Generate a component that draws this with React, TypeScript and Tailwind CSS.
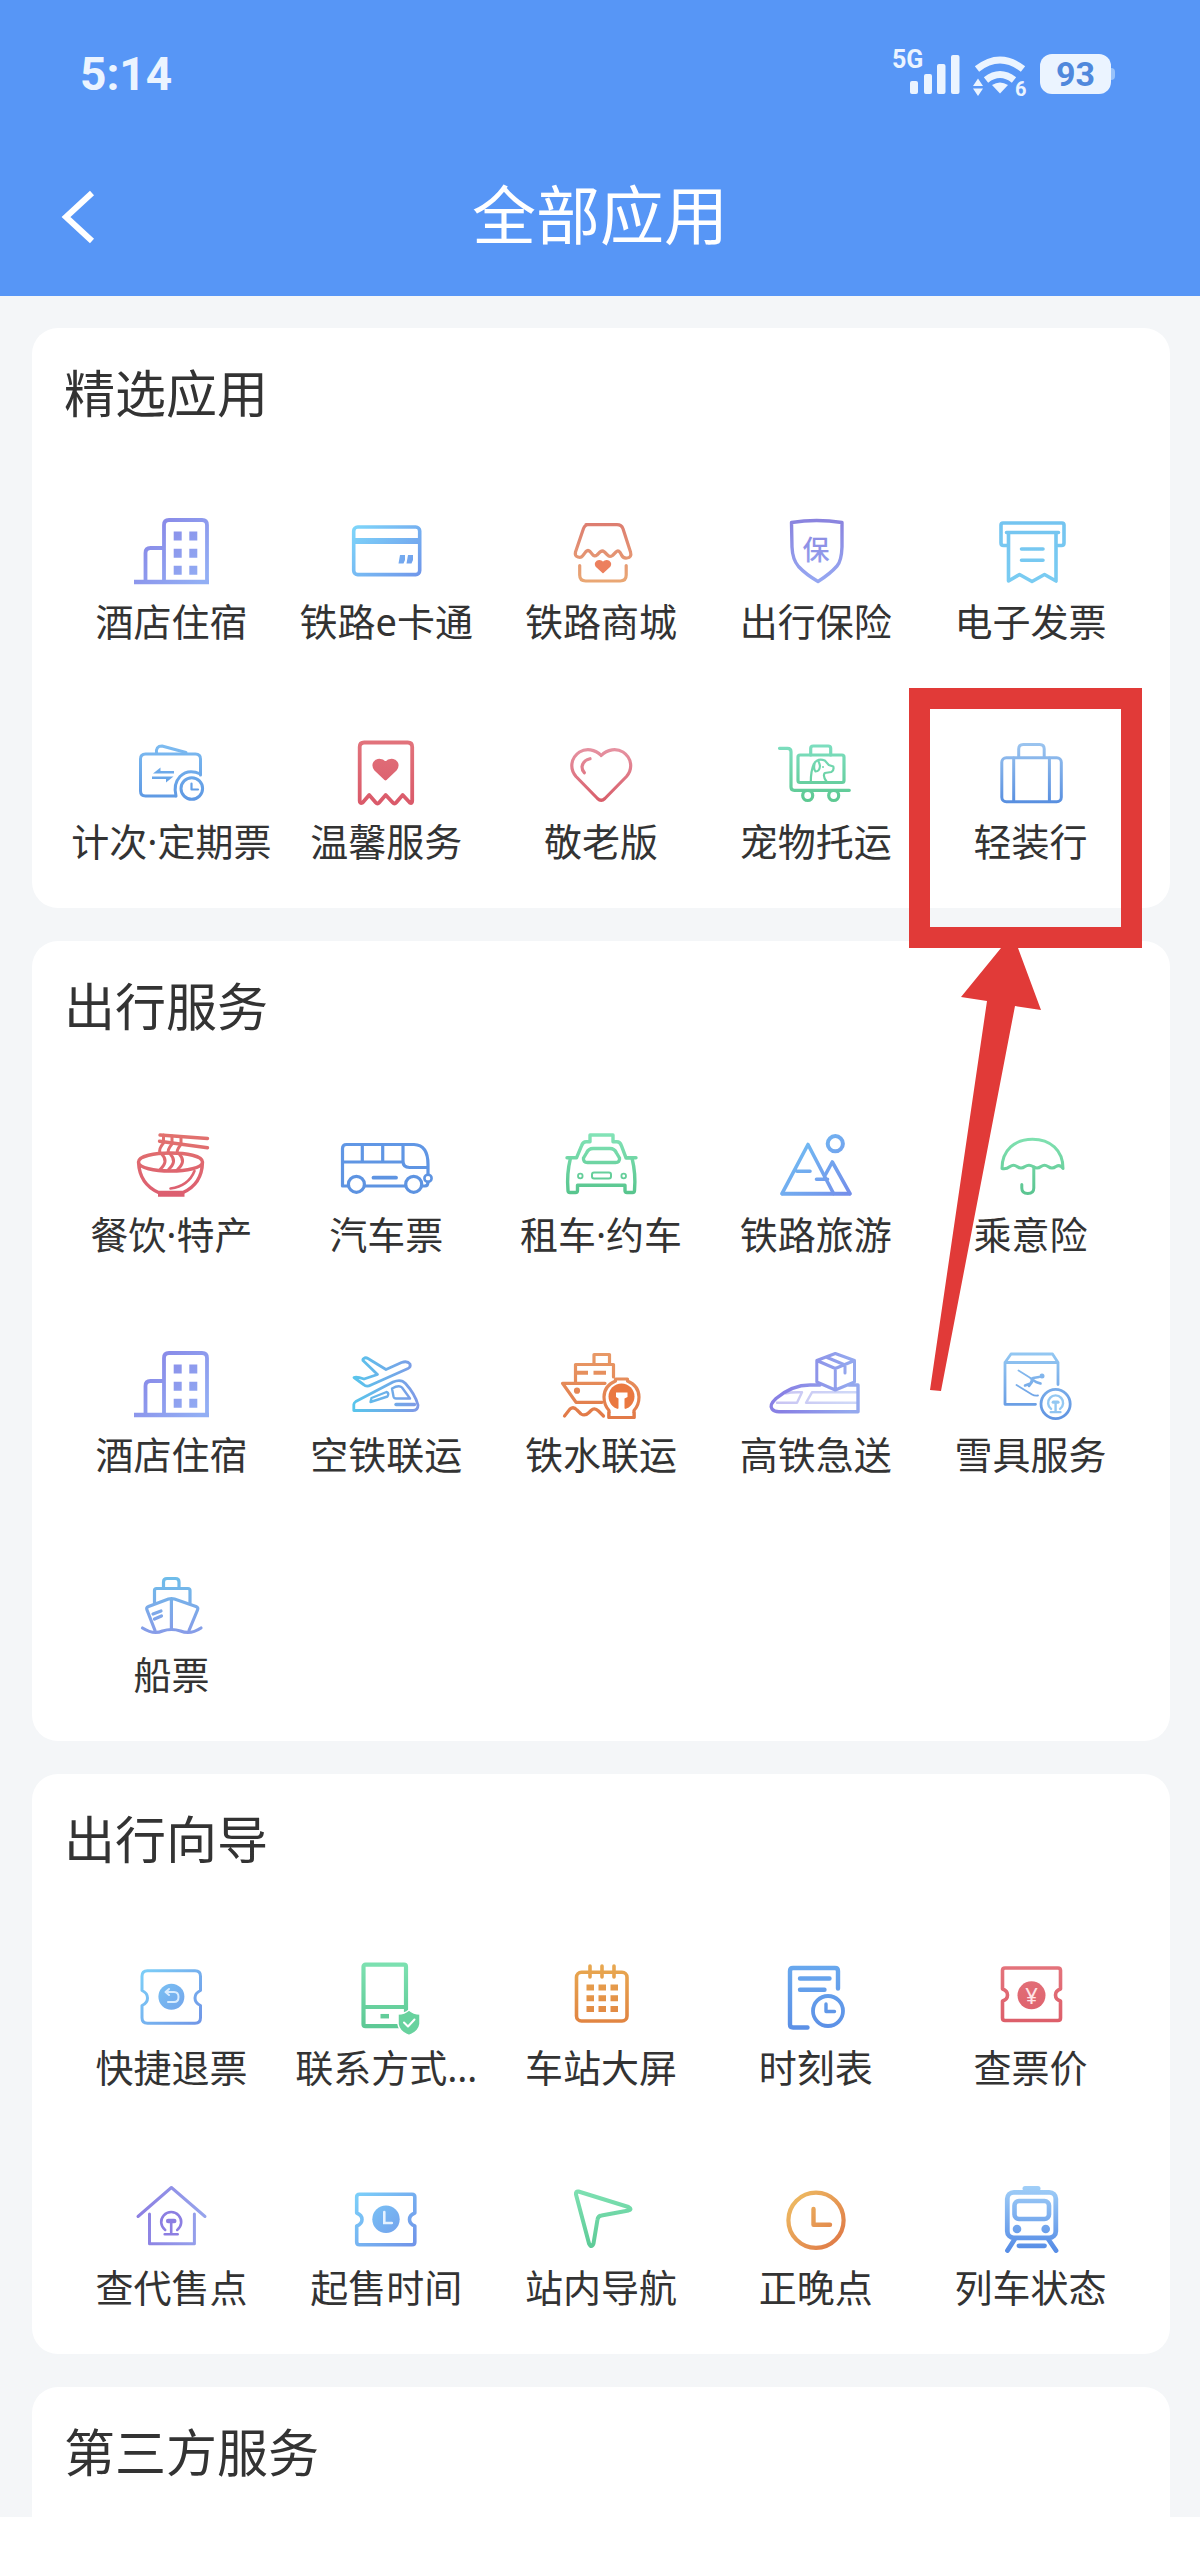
import { useId, type ReactNode } from 'react'

interface IconProps {
  from: string
  to: string
  // gradient direction, vertical unless given
  dir?: 'v' | 'h' | 'd'
  width?: number
  children: ReactNode | ((paint: string) => ReactNode)
}

const DIRS = {
  v: { x1: 0, y1: 8, x2: 0, y2: 72 },
  h: { x1: 16, y1: 0, x2: 84, y2: 0 },
  d: { x1: 20, y1: 12, x2: 80, y2: 70 },
}

function Icon({ from, to, dir = 'v', width = 3.2, children }: IconProps) {
  const id = useId()
  const paint = `url(#${id})`
  return (
    <svg
      viewBox="0 0 100 80"
      className="w-[100px] h-[80px] shrink-0"
      fill="none"
      stroke={paint}
      strokeWidth={width}
      strokeLinejoin="round"
      strokeLinecap="round"
      aria-hidden="true"
    >
      <defs>
        <linearGradient id={id} gradientUnits="userSpaceOnUse" {...DIRS[dir]}>
          <stop offset="0" stopColor={from} />
          <stop offset="1" stopColor={to} />
        </linearGradient>
      </defs>
      {typeof children === 'function' ? children(paint) : children}
    </svg>
  )
}

function HotelIcon() {
  return (
    <Icon from="#8884e6" to="#92aef4" dir="d" width={3.8}>
      {p => (
        <>
          <path d="M43 71V14q0-5 5-5h33q5 0 5 5v57M24.5 71V42q0-5 5-5H43" />
          <path d="M13 71h75" strokeWidth={4.5} strokeLinecap="butt" />
          <path
            fill={p}
            stroke="none"
            d="M52.7 20.5h8v9h-8zM68.3 20.5h8v9h-8zM52.7 37.7h8v9h-8zM68.3 37.7h8v9h-8zM52.7 54.8h8v9h-8zM68.3 54.8h8v9h-8z"
          />
        </>
      )}
    </Icon>
  )
}

function CardIcon() {
  return (
    <Icon from="#7dd6fa" to="#7096ea" dir="d" width={3.6}>
      {p => (
        <>
          <rect x="17.7" y="16" width="66" height="47.6" rx="4" />
          <path d="M18 30h66" strokeWidth={6} strokeLinecap="butt" />
          <path fill={p} stroke="none" d="M64 44h5v5l-1.5 3.5h-5zM72 44h5v5l-1.5 3.5H70.5z" />
        </>
      )}
    </Icon>
  )
}

function MallIcon() {
  return (
    <Icon from="#dc7a70" to="#eaa874">
      <path d="M35 13.7h31q4.5 0 6 4L79.5 41q1.5 5.5-3.5 6-4 .5-5.5-3-2.5-6-5.5-3l-3.5 3.5q-3 2-5-.5l-3-3q-2.5-2-4.5 0l-3 3q-2.5 2-4.5-.5l-2.5-3q-2-2-4 0l-3.5 4.5q-1.5 2-4.5 1-3.5-1-2.5-5l8-23.5q1.5-4 5.5-4z" />
      <path d="M28.7 54.5V64q0 6 6 6h34.5q6 0 6-6v-9.5" />
      <path
        fill="#ec805e"
        stroke="#ec805e"
        strokeWidth={1.6}
        d="M52 61.5l-6.5-6q-2-3 .5-5 3-1.8 6 1 3-2.8 6-1 2.5 2 .5 5z"
      />
    </Icon>
  )
}

function ShieldIcon() {
  return (
    <Icon from="#8a83de" to="#96a8f2" width={3.4}>
      {p => (
        <>
          <path d="M25.5 11.5q25-4 50.5 0V36q-.5 14-5 19-7 8-19 15.5-12-7-19.5-15-6-7-6.5-19.5z" />
          <text x="50" y="49" textAnchor="middle" fontSize="27" stroke="none" fill={p} className="font-medium">
            保
          </text>
        </>
      )}
    </Icon>
  )
}

function InvoiceIcon() {
  return (
    <Icon from="#74c4f0" to="#7accf2" width={3.6}>
      <path d="M26 34.5h-3.5q-2.5 0-2.5-2.5V14q0-2 2-2h59q2 0 2 2v18q0 2.5-2.5 2.5H77M25.5 21.5h52" />
      <path d="M27.5 22v48l11-6.5 12.5 7 12.5-7 11.5 6.5V22M40.5 38h21.5M40.5 49.3h21.5" />
    </Icon>
  )
}

function WalletIcon() {
  return (
    <Icon from="#80bff2" to="#5c96e2" width={3}>
      {p => (
        <>
          <path d="M79.5 44V28q0-5-5-5h-50q-5 0-5 5v32q0 5 5 5H54.5" />
          <path d="M35.5 22.5q-1-7.5 5.5-7.5L65 21.5" />
          <path d="M55 65q-3-12 4-19.5 8-8 20.5-2.5" />
          <circle cx="70.8" cy="57.5" r="10.8" />
          <path d="M70.5 52.5v6h6.5" strokeWidth={2.2} />
          <path fill={p} stroke="none" d="M32 42.4l7.5-6v3.6h13.5v2.4zM52.5 45.6l-7.5 6V48H31v-2.4z" />
        </>
      )}
    </Icon>
  )
}

function CareIcon() {
  return (
    <Icon from="#e2747c" to="#da5a6a" width={3.8}>
      {p => (
        <>
          <path d="M23.7 70V16q0-4.5 4.5-4.5h43.5q4.5 0 4.5 4.5v54q0 3-2.5 1.5l-7-7.5-6.5 7.5q-1.7 2-3.5 0l-7-7.5-6.5 7.5q-1.7 2-3.5 0l-6.5-7.5-6.5 7.5q-3 1.5-3-1.5z" />
          <path
            fill={p}
            strokeWidth={3}
            d="M49.5 48L39.5 38.5q-3.5-5 1-8.5 4.5-2 9 2.3 4.5-4.3 9-2.3 4.5 3.5 1 8.5z"
          />
        </>
      )}
    </Icon>
  )
}

function HeartIcon() {
  return (
    <Icon from="#e89cac" to="#d85c68">
      <path d="M50.2 24.5C44 18 35 17 28.5 21 19.5 27 18.5 38 25 45.5L46.5 67.5q3.7 3.5 7.4 0L75.5 45.5C82 38 81 27 72 21 65.5 17 56.5 18 50.2 24.5z" />
      <path d="M39 27.7q-7 1.5-8 8 0 3.5 2.3 6" />
    </Icon>
  )
}

function PetIcon() {
  return (
    <Icon from="#80e0c4" to="#5cc890">
      {p => (
        <>
          <path d="M13.5 17.3h8q3.5 0 3.5 3.5V56q0 3.3 3.3 3.3h55" />
          <rect x="32" y="24" width="46" height="27.5" rx="2" />
          <path d="M44.7 24v-6.5q0-2.5 2.5-2.5h15q2.5 0 2.5 2.5V24" />
          <circle cx="41.7" cy="64.5" r="5" />
          <circle cx="67.7" cy="64.5" r="5" />
          <path
            d="M44.8 51q0-11 3-18 4-6.5 11-3.5l4 4.5 4.5 1.5q1 4-2 5.5l-6.5 1q-2.5 3 2 9M49 31q-2 7 .5 9.5 4 0 4.5-5.5-.5-3-2-5.5"
            strokeWidth={2.2}
          />
          <circle cx="57" cy="36" r="1" fill={p} stroke="none" />
        </>
      )}
    </Icon>
  )
}

function SuitcaseIcon() {
  return (
    <Icon from="#a0c8f0" to="#588fe0" width={3}>
      <rect x="20.8" y="26.7" width="59.5" height="44" rx="4.5" />
      <path d="M37.7 26.5V18q0-4.5 4.5-4.5h16.5q4.5 0 4.5 4.5v8.5M32.7 27v43.5M68.4 27v43.5" />
    </Icon>
  )
}

function NoodleIcon() {
  return (
    <Icon from="#e2726e" to="#dc5e70" width={3.4}>
      <path d="M17.5 38c0-12 64-12 64 0s-64 12-64 0q1 22 20 30.5h24.5q19-8.5 19.5-30.5" />
      <path d="M37 70.5h26.5" strokeWidth={4.5} strokeLinecap="butt" />
      <path d="M73.5 47q-6 15-24 17.5" strokeWidth={2.6} />
      <path d="M39 11l47.5 3.5M38.5 17.2l48 6.5" />
      <path
        d="M42.5 11v8q-5 6-3.5 9.5M51 12v8q-5 6-3.5 9M60 12.5v8q-5 6-3.5 9M41 30.5q7 7-2 15M49.5 30.5q7 7-2 15M58.5 30.5q7 7-2 15"
        strokeWidth={3}
      />
    </Icon>
  )
}

function BusIcon() {
  return (
    <Icon from="#6298e6" to="#5c92e0">
      <path d="M12 62H6.5V24.5q0-4 4-4H78q14 .5 14 20v10M6.5 38h60M26.3 20.5V38M46.7 20.5V38M67 20.5V37q0 6.5 6.5 6.5H92" />
      <path d="M29 62h40M86 62h3q3 0 3-4" />
      <path d="M37.5 53.7h22.5" strokeWidth={3.8} />
      <circle cx="20.4" cy="60.3" r="8" />
      <circle cx="77.7" cy="60.3" r="8" />
      <circle cx="92" cy="54.3" r="3.6" strokeWidth={2.6} />
    </Icon>
  )
}

function TaxiIcon() {
  return (
    <Icon from="#84e4b8" to="#56c48c" width={3.4}>
      <path d="M39 17.8V11h23v6.8h4q3 0 4.5 4l4.5 12H85M39 17.8h-4q-3 0-4.5 4l-5 12H16M75 34h6q4 16 2.5 32.5 0 2-2 2h-5.5q-2 0-2-2V61.2H26.5v5.3q0 2-2 2h-5.5q-2 0-2-2Q15.5 50 19.5 34" />
      <path d="M42 24.5h17q4.5 0 6.5 4.5l3 5q.5 4.5-4 4.5H36.5q-4.5 0-4-4.5l3-5q2-4.5 6.5-4.5z" />
      <rect x="41" y="48.5" width="19" height="6" rx="2" strokeWidth={2} />
      <circle cx="29.3" cy="52" r="2.3" strokeWidth={1.8} />
      <circle cx="72.7" cy="52" r="2.3" strokeWidth={1.8} />
    </Icon>
  )
}

function MountainIcon() {
  return (
    <Icon from="#70c4f4" to="#7490ea" dir="d" width={3.6}>
      <path d="M16 69.7L42 20.5l25.5 49M31 47.3h13M50.5 55.3h11" />
      <path d="M59.5 50.5l6.8-12.5L84 69.7" />
      <path d="M16.5 69.7h67" strokeWidth={4} />
      <circle cx="69.3" cy="19.7" r="7.6" strokeWidth={4} />
    </Icon>
  )
}

function UmbrellaIcon() {
  return (
    <Icon from="#84e4b4" to="#5ac490" width={3}>
      <path d="M21 44.5C21 26 34 15.3 51.5 15.3S82 26 82 44.5q-3-4.5-7-2-4 3-8 0-3.5-2.5-7 0-4 3-8 0-4-2.5-8 0-4 3-8 0-3.5-2.5-7 0-4 3-8 2z" />
      <path d="M52.8 43v21q0 5.5-6 5.5t-6-5.5v-3.5" />
    </Icon>
  )
}

function PlaneTrainIcon() {
  return (
    <Icon from="#58c6ec" to="#8098e6" dir="h" width={2.8}>
      <path d="M28 14.5q1.5-1.5 4 0L50 25.5l15.5-7q6-2 8.5 1.5 1 3-2 4.5L35 41q-4.5 2.5-7.5-.5L18 33.5q3-1 10 1.5l13.5-4.5L27 16.5q-.5-1 1-2z" />
      <path d="M17.8 66.5v-6q0-1.5 2-3L57 38q8-3.5 12.5 1.5Q79 50 82 61q0 5.5-5 5.5z" />
      <path d="M56 44.5q7-4 10-1l8 11H60q-2 0-2.5-2zM34.5 58l1-4 15-6q3 1 1 4.5z" strokeWidth={2.4} />
      <path d="M60 60.5h18.5" strokeWidth={3.4} />
    </Icon>
  )
}

// rail emblem: an open ring over a rail cross-section
function RailMark({ cx, cy, r, width }: { cx: number; cy: number; r: number; width: number }) {
  const s = r / 10
  return (
    <g transform={`translate(${cx} ${cy}) scale(${s})`} strokeWidth={width / s}>
      <path d="M-6 8.5A10 10 0 1 1 6 8.5" />
      <path d="M-3-.5h6" strokeWidth={4.6} />
      <path d="M0 0v11M-6.5 12.8h13" />
    </g>
  )
}

function ShipRailIcon() {
  return (
    <Icon from="#e89a68" to="#e27a48">
      <path d="M43 19.5V10.5h15.5v9M24.5 38V20.5h38V33M54 39.3H11.5l13.5 19H51" />
      <path d="M26 28.7h11M42.5 28.7h12.5" strokeWidth={4} strokeLinecap="butt" />
      <circle cx="26" cy="46.7" r="1.5" />
      <path d="M13.5 72l5.5-7q3.5-3 7 1l4 4q4 2.5 8-1.5l2-2q3.5-3.5 7.5.5l5 5" />
      <path fill="#fff" d="M64.5 37v-2h12v2q11.5 5 11.5 16 0 8-5 13.5v7H58v-7q-5-5.5-5-13.5 0-11 11.5-16z" />
      <circle cx="70.5" cy="52.5" r="13" fill="#ea7840" stroke="none" />
      <path
        fill="#fff"
        stroke="none"
        d="M65 48.5h11.5v4.5l-3 1.5V64q1 4 8.5 5v3H59v-3q7.5-1 8.5-5v-9.5L65 53z"
      />
      <path d="M58 68.5v5h25v-5" />
    </Icon>
  )
}

function ExpressIcon() {
  return (
    <Icon from="#8880e4" to="#94a8ee" dir="h" width={3.4}>
      <path d="M54 41H44Q26 41 10 54.5q-7 6.5-4 10.5 2 2.7 7 2.7h79V41h-9" />
      <path d="M20 49.5q4-1.5 16-1.2l-5 10.5H11M92 48.3H46l-6 10.5h52" strokeWidth={2.4} opacity={0.45} />
      <path
        d="M69.3 9.5l19.2 7v21.5l-19.2 8-18.5-8V16.5zM50.8 16.5l18.5 8 19.2-8M69.3 24.5V46M60 13l19 8v8"
        strokeWidth={3}
      />
    </Icon>
  )
}

function SkiIcon() {
  return (
    <Icon from="#94c8f2" to="#6296e2" width={2.8}>
      {p => (
        <>
          <path d="M24 18.5l6-8.5h41.5l5.5 8.5zM24 18.5v41.8h30.5M77 18.5v22" />
          <path d="M37.5 26.5l12 7.5M35.5 41l15.5 9.5q2.5 1.5 6 1" strokeWidth={1.8} />
          <path d="M44 41.5l5.5-2 2.5-5.5 6-1M50 34.5l5 3.5 4.5 1.5M51 38l-3 4" strokeWidth={2.6} />
          <circle cx="61" cy="32" r="2.5" fill={p} stroke="none" />
          <circle cx="74.6" cy="60" r="14.6" />
          <RailMark cx={74.6} cy={58.5} r={7.5} width={2.4} />
        </>
      )}
    </Icon>
  )
}

function ShipIcon() {
  return (
    <Icon from="#6cc0ea" to="#889ae8">
      <path d="M42.5 24V18q0-3.5 3.5-3.5h8.5q3.5 0 3.5 3.5v6M33.5 39V26.5q0-2 2-2H67q2 0 2 2V39" />
      <path d="M34 66.5L26 46q-1-2.5 1.5-3.5L47.5 35q3-1 6 0L75 42.5q2.5 1 1.5 3.5L68 66.5M50.4 35v30M32 50l8-3M33.5 55l7-3" />
      <path d="M21.5 64q11 7 20 3 9-3 18 0 10 4 20.5-3" />
    </Icon>
  )
}

function RefundIcon() {
  return (
    <Icon from="#7cd0f8" to="#7094e6" dir="d" width={3}>
      {p => (
        <>
          <path d="M26.5 13.8H74q5.5 0 5.5 5.5V33.5q-5.5 2.5-5.5 7.5t5.5 7.5v12.3q0 5.5-5.5 5.5H26.5q-5.5 0-5.5-5.5V48.5q5.5-2.5 5.5-7.5t-5.5-7.5V19.3q0-5.5 5.5-5.5z" />
          <circle cx="50.4" cy="39.7" r="13" fill={p} stroke="none" />
          <path d="M48 32l-3.5 3 3.5 3M45 35h8q4.5 0 4.5 5t-4.5 5h-6" stroke="#d8ecff" strokeWidth={2} />
        </>
      )}
    </Icon>
  )
}

function PhoneIcon() {
  return (
    <Icon from="#7ce0b0" to="#5cc894" width={4.2}>
      <rect x="27.5" y="7.7" width="42.5" height="61.5" rx="2" />
      <path d="M28 50h41.5" />
      <path d="M44.5 59.2h8.5" strokeWidth={4.5} strokeLinecap="butt" />
      <path
        fill="#68d29e"
        stroke="#fff"
        strokeWidth={1.5}
        d="M73 53q4.5 4 11 4v10q-1 7.5-11 11.5-10-4-11-11.5V57q6.5 0 11-4z"
      />
      <path d="M68 65.5l4 4 6.5-7" stroke="#fff" strokeWidth={2} />
    </Icon>
  )
}

function CalendarIcon() {
  return (
    <Icon from="#e8a850" to="#e08040" width={3.6}>
      {p => (
        <>
          <rect x="25.5" y="15.3" width="50.5" height="48.7" rx="5" />
          <path d="M39 9v11M51 9v11M63 9v11" />
          <path
            fill={p}
            stroke="none"
            d="M35.5 27.5h7.5v6h-7.5zM47.5 27.5h7.5v6h-7.5zM59.5 27.5h7.5v6h-7.5zM35.5 38.2h7.5v6h-7.5zM47.5 38.2h7.5v6h-7.5zM59.5 38.2h7.5v6h-7.5zM35.5 49h7.5v6h-7.5zM47.5 49h7.5v6h-7.5zM59.5 49h7.5v6h-7.5z"
          />
        </>
      )}
    </Icon>
  )
}

function TimetableIcon() {
  return (
    <Icon from="#68a8ee" to="#5c90e6" width={4.4}>
      <path d="M72 31.5V14q0-3-3-3H27q-3 0-3 3v53.5q0 3 3 3h14.5M34 21.5h29.5M34 32.7h24.5" />
      <circle cx="62" cy="54" r="15" strokeWidth={3.8} />
      <path d="M60 47v7.5h8.5" strokeWidth={3.4} />
    </Icon>
  )
}

function PriceIcon() {
  return (
    <Icon from="#e4747c" to="#dc5c68" width={3.6}>
      {p => (
        <>
          <path d="M24 11h53q2.5 0 2.5 2.5V32q-5 1.5-5 6t5 6v17q0 2.5-2.5 2.5H24q-2.5 0-2.5-2.5V44q5-1.5 5-6t-5-6V13.5q0-2.5 2.5-2.5z" />
          <circle cx="50.5" cy="38.3" r="14" fill={p} stroke="none" />
          <text x="50.5" y="46.5" textAnchor="middle" fontSize="22" stroke="none" fill="#ffe4e6">
            ¥
          </text>
        </>
      )}
    </Icon>
  )
}

function HouseIcon() {
  return (
    <Icon from="#8c7ee2" to="#96a4ec" dir="h" width={3}>
      <path d="M17 39.5L50.4 10.5l33.6 29M28.5 37v29.7h44.9V37" />
      <RailMark cx={50.2} cy={44.5} r={10} width={2.6} />
    </Icon>
  )
}

function SaleTimeIcon() {
  return (
    <Icon from="#7cd2fa" to="#7092e8" dir="d" width={3.6}>
      {p => (
        <>
          <path d="M23.5 17.3H76q2.8 0 2.8 2.8V36q-5.3 2-5.3 6.5t5.3 6.5v16q0 2.7-2.8 2.7H23.5q-2.8 0-2.8-2.7V49q5.3-2 5.3-6.5T20.7 36V20q0-2.7 2.8-2.7z" />
          <circle cx="50" cy="42.3" r="13.7" fill={p} stroke="none" />
          <path d="M48.3 35v11h7.5" stroke="#e6f2ff" strokeWidth={2.6} strokeLinejoin="miter" />
        </>
      )}
    </Icon>
  )
}

function NavIcon() {
  return (
    <Icon from="#80e2b4" to="#5cca96" width={4}>
      <path d="M27.5 14.5l50 15.5q4 2 0 3.5L50.5 38.5q-3.5.5-4 4L42.5 66.5q-2 5-4.5 0l-13-49q-.5-3.5 2.5-3z" />
    </Icon>
  )
}

function ClockIcon() {
  return (
    <Icon from="#f0c466" to="#de7444" dir="d" width={4.2}>
      <circle cx="50" cy="43.3" r="27.6" />
      <path d="M47.5 32v15.7h16.5" strokeWidth={4.4} />
    </Icon>
  )
}

function MetroIcon() {
  return (
    <Icon from="#a2d0f8" to="#588ee6" width={4.8}>
      {p => (
        <>
          <rect x="26.3" y="15.3" width="48.5" height="45.5" rx="6.5" />
          <path d="M44 11.5h13" strokeWidth={5} />
          <rect x="33.5" y="24" width="34.5" height="18" rx="4.5" strokeWidth={4.6} />
          <circle cx="36" cy="52" r="4.3" fill={p} stroke="none" />
          <circle cx="64.7" cy="52" r="4.3" fill={p} stroke="none" />
          <path d="M33.5 62.5l-7 11M67.5 62.5l7.5 11" />
          <path d="M38 68.8h25.5" />
        </>
      )}
    </Icon>
  )
}

interface AppItem {
  name: string
  icon: () => ReactNode
  marked?: boolean
}

const SECTIONS: { title: string; items: AppItem[] }[] = [
  {
    title: '精选应用',
    items: [
      { name: '酒店住宿', icon: HotelIcon },
      { name: '铁路e卡通', icon: CardIcon },
      { name: '铁路商城', icon: MallIcon },
      { name: '出行保险', icon: ShieldIcon },
      { name: '电子发票', icon: InvoiceIcon },
      { name: '计次·定期票', icon: WalletIcon },
      { name: '温馨服务', icon: CareIcon },
      { name: '敬老版', icon: HeartIcon },
      { name: '宠物托运', icon: PetIcon },
      { name: '轻装行', icon: SuitcaseIcon, marked: true },
    ],
  },
  {
    title: '出行服务',
    items: [
      { name: '餐饮·特产', icon: NoodleIcon },
      { name: '汽车票', icon: BusIcon },
      { name: '租车·约车', icon: TaxiIcon },
      { name: '铁路旅游', icon: MountainIcon },
      { name: '乘意险', icon: UmbrellaIcon },
      { name: '酒店住宿', icon: HotelIcon },
      { name: '空铁联运', icon: PlaneTrainIcon },
      { name: '铁水联运', icon: ShipRailIcon },
      { name: '高铁急送', icon: ExpressIcon },
      { name: '雪具服务', icon: SkiIcon },
      { name: '船票', icon: ShipIcon },
    ],
  },
  {
    title: '出行向导',
    items: [
      { name: '快捷退票', icon: RefundIcon },
      { name: '联系方式…', icon: PhoneIcon },
      { name: '车站大屏', icon: CalendarIcon },
      { name: '时刻表', icon: TimetableIcon },
      { name: '查票价', icon: PriceIcon },
      { name: '查代售点', icon: HouseIcon },
      { name: '起售时间', icon: SaleTimeIcon },
      { name: '站内导航', icon: NavIcon },
      { name: '正晚点', icon: ClockIcon },
      { name: '列车状态', icon: MetroIcon },
    ],
  },
]

function StatusBar() {
  return (
    <div className="flex items-center justify-between h-[148px] pl-20 pr-[85px] text-[#ebf4ff]">
      <span className="font-[Roboto,sans-serif] text-[46px] leading-none font-bold">5:14</span>
      <div className="flex items-center gap-3">
        <svg viewBox="0 -6 136 60" className="w-[136px] h-[60px]" fill="#ebf4ff" aria-label="5G">
          <text x="0" y="18" fontSize="25" className="font-[Roboto,sans-serif] font-bold">5G</text>
          <rect x="18" y="31" width="8" height="13" rx="2" />
          <rect x="32" y="24" width="8" height="20" rx="2" />
          <rect x="45" y="14" width="8.5" height="30" rx="2" />
          <rect x="59" y="5" width="8.5" height="39" rx="2" />
          <g fill="none" stroke="#ebf4ff" strokeWidth="7">
            <path d="M85 19q23-18 46 0" />
            <path d="M94 30q14-11 28 0" />
          </g>
          <path d="M100 35q8-5 16 0l-8 8.5z" />
          <path d="M81 36l5-7.500 5 7.500zM81 38.500h10L86 46z" />
          <text x="123" y="46" fontSize="20" className="font-[Roboto,sans-serif] font-bold">6</text>
        </svg>
        <div className="flex items-center">
          <span className="flex items-center justify-center w-[71px] h-10 rounded-xl bg-[#ebf4ff] text-[#4f88dc] font-[Roboto,sans-serif] text-[34px] leading-none font-bold">
            93
          </span>
          <span className="w-1 h-3 rounded-r bg-[#98c2fa]" />
        </div>
      </div>
    </div>
  )
}

// red frame and arrow pointing at one entry
function Marker() {
  return (
    <div className="absolute -left-[14px] -top-[43px] w-[233px] pointer-events-none">
      <div className="h-[260px] border-[21px] border-[#e13a38]" />
      <svg viewBox="0 0 233 443" className="block w-[233px] h-[443px]" fill="#e13a38" aria-hidden="true">
        <path d="M92 0h17l23 62-26-4L32 443l-11-1L78 53l-26-4z" />
      </svg>
    </div>
  )
}

function AppCell({ item }: { item: AppItem }) {
  const Drawing = item.icon
  return (
    <li className="relative min-w-0">
      <button type="button" className="flex flex-col items-center gap-2 w-full">
        <Drawing />
        <span className="text-[38px] leading-[44px] whitespace-nowrap">{item.name}</span>
      </button>
      {item.marked && <Marker />}
    </li>
  )
}

export default function App() {
  return (
    <div className="bg-white text-[#333] font-['Noto_Sans','Noto_Sans_CJK_SC',sans-serif]">
      <header className="bg-[#5796f6] pb-[10px]">
        <StatusBar />
        <div className="grid grid-cols-[120px_1fr_120px] items-center h-[138px] text-white">
          <button type="button" aria-label="返回" className="pl-[58px]">
            <svg viewBox="0 0 40 54" className="w-10 h-[54px]" fill="none" stroke="#fff" strokeWidth="6">
              <path d="M34 3L8 27l26 24" />
            </svg>
          </button>
          <h1 className="pb-1 text-center text-[64px] leading-none">全部应用</h1>
        </div>
      </header>

      <main className="flex flex-col gap-[33px] bg-[#f4f6f8] pt-8 pl-8 pr-[30px]">
        {SECTIONS.map(section => (
          <section key={section.title} className="bg-white rounded-[26px] px-8 pt-[35px] pb-[45px]">
            <h2 className="text-[51px] leading-[60px]">{section.title}</h2>
            <ul className="grid grid-cols-5 gap-y-[88px] mt-[88px]">
              {section.items.map(item => (
                <AppCell key={item.name} item={item} />
              ))}
            </ul>
          </section>
        ))}
        <section className="bg-white rounded-t-[26px] px-8 py-[35px]">
          <h2 className="text-[51px] leading-[60px]">第三方服务</h2>
        </section>
      </main>
    </div>
  )
}
